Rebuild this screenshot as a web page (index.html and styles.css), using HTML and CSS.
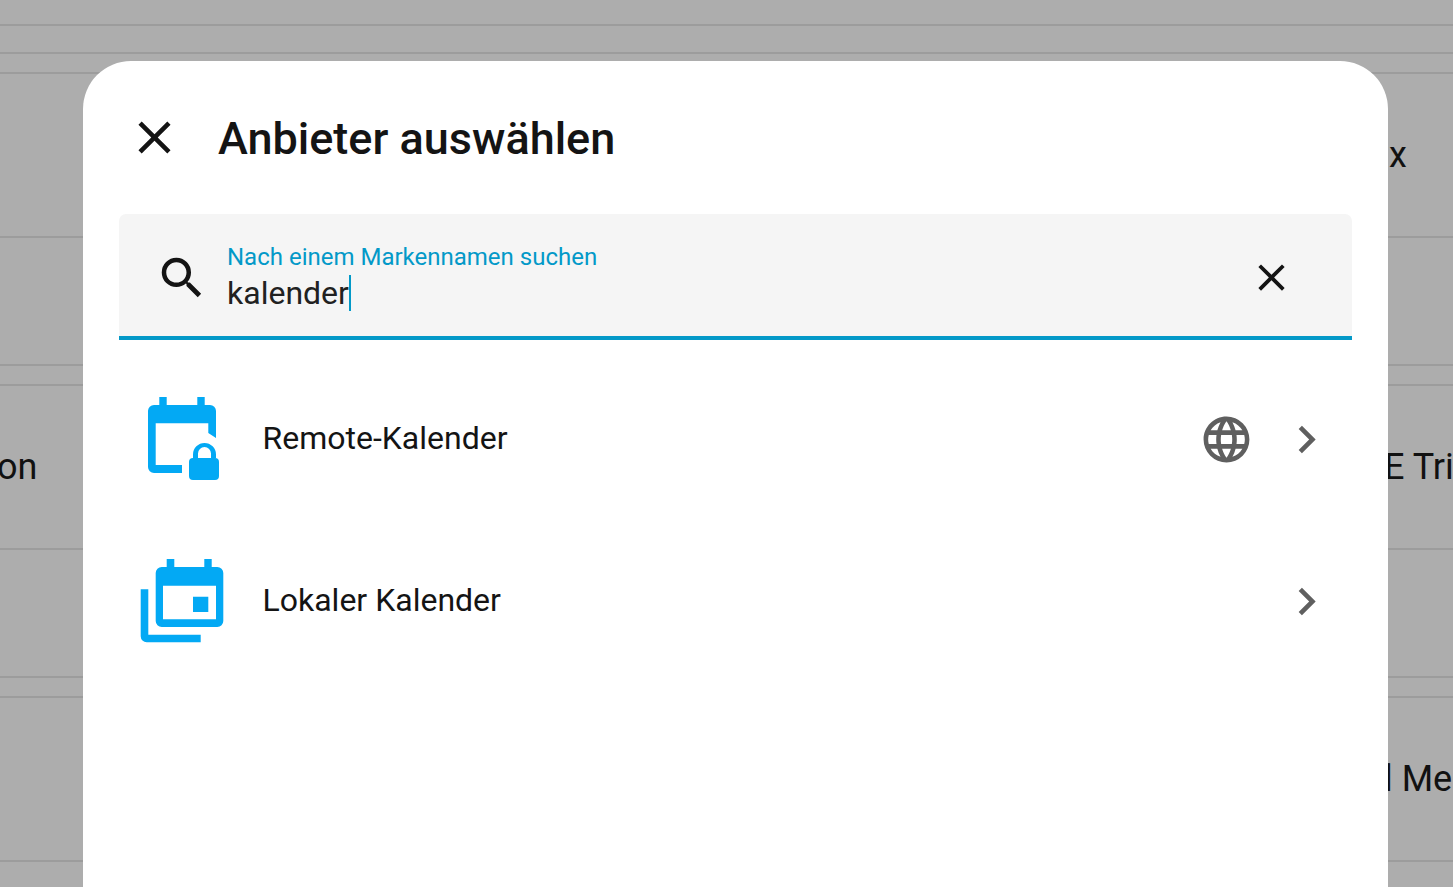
FILE: index.html
```html
<!DOCTYPE html>
<html lang="de">
<head>
    <meta charset="UTF-8">
    <meta name="viewport" content="width=device-width, initial-scale=1.0">
    <title>Anbieter auswählen</title>
    <link rel="stylesheet" href="styles.css">
</head>
<body>
    <!-- page behind the dialog -->
    <div class="backdrop">
        <div class="bg-row bg-row-a"></div>
        <div class="bg-row bg-row-b"></div>
        <div class="bg-row bg-row-c"></div>
        <div class="bg-row bg-row-tall"><span class="bg-left"></span><span class="bg-right bg-right-x">x</span></div>
        <div class="bg-row bg-row-d"></div>
        <div class="bg-row bg-row-c"></div>
        <div class="bg-row bg-row-tall"><span class="bg-left">on</span><span class="bg-right">E Tri</span></div>
        <div class="bg-row bg-row-d"></div>
        <div class="bg-row bg-row-c"></div>
        <div class="bg-row bg-row-tall"><span class="bg-left"></span><span class="bg-right">l Me</span></div>
    </div>

    <div class="dialog">
        <div class="dialog-header">
            <svg class="icon-55" viewBox="0 0 24 24"><path d="M19,6.41L17.59,5L12,10.59L6.41,5L5,6.41L10.59,12L5,17.59L6.41,19L12,13.41L17.59,19L19,17.59L13.41,12L19,6.41Z"/></svg>
            <h1 class="dialog-title">Anbieter auswählen</h1>
        </div>

        <div class="search-field">
            <svg class="icon-search" viewBox="0 0 24 24"><path d="M9.5,3A6.5,6.5 0 0,1 16,9.5C16,11.11 15.41,12.59 14.44,13.73L14.71,14H15.5L20.5,19L19,20.5L14,15.5V14.71L13.73,14.44C12.59,15.41 11.11,16 9.5,16A6.5,6.5 0 0,1 3,9.5A6.5,6.5 0 0,1 9.5,3M9.5,5C7,5 5,7 5,9.5C5,12 7,14 9.5,14C12,14 14,12 14,9.5C14,7 12,5 9.5,5Z"/></svg>
            <div class="search-text">
                <div class="search-label">Nach einem Markennamen suchen</div>
                <div class="search-value"><span class="caret-text">kalender</span></div>
            </div>
            <svg class="icon-clear" viewBox="0 0 24 24"><path d="M19,6.41L17.59,5L12,10.59L6.41,5L5,6.41L10.59,12L5,17.59L6.41,19L12,13.41L17.59,19L19,17.59L13.41,12L19,6.41Z"/></svg>
        </div>

        <div class="brand-list">
            <div class="brand-row">
                <svg class="brand-icon" viewBox="0 0 90 90">
                    <path d="M22.3 3H29.7V11H60.3V3H67.7V11H73A6 6 0 0 1 79 17V44L71.3 39V29.3H18.7V71H45V79H17A6 6 0 0 1 11 73V17A6 6 0 0 1 17 11H22.3Z"/>
                    <path fill-rule="evenodd" d="M67.5 49A11.500 11.500 0 0 1 79 60.500V64H78A4 4 0 0 1 82 68V82A4 4 0 0 1 78 86H56A4 4 0 0 1 52 82V68A4 4 0 0 1 56 64V60.500A11.500 11.500 0 0 1 67.500 49ZM67.500 53A6.500 6.500 0 0 0 61 59.500V64H74V59.500A6.500 6.500 0 0 0 67.500 53Z"/>
                </svg>
                <span class="brand-name">Remote-Kalender</span>
                <svg class="icon-55 icon-grey" viewBox="0 0 24 24"><path d="M16.36,14C16.44,13.34 16.5,12.68 16.5,12C16.5,11.32 16.44,10.66 16.36,10H19.74C19.9,10.64 20,11.31 20,12C20,12.69 19.9,13.36 19.74,14M14.59,19.56C15.19,18.45 15.65,17.25 15.97,16H18.92C17.96,17.65 16.43,18.93 14.59,19.56M14.34,14H9.66C9.56,13.34 9.5,12.68 9.5,12C9.5,11.32 9.56,10.65 9.66,10H14.34C14.43,10.65 14.5,11.32 14.5,12C14.5,12.68 14.43,13.34 14.34,14M12,19.96C11.17,18.76 10.5,17.43 10.09,16H13.91C13.5,17.43 12.83,18.76 12,19.96M8,8H5.08C6.03,6.34 7.57,5.06 9.4,4.44C8.8,5.55 8.35,6.75 8,8M5.08,16H8C8.35,17.25 8.8,18.45 9.4,19.56C7.57,18.93 6.03,17.65 5.08,16M4.26,14C4.1,13.36 4,12.69 4,12C4,11.31 4.1,10.64 4.26,10H7.64C7.56,10.66 7.5,11.32 7.5,12C7.5,12.68 7.56,13.34 7.64,14M12,4.03C12.83,5.23 13.5,6.57 13.91,8H10.09C10.5,6.57 11.17,5.23 12,4.03M18.92,8H15.97C15.65,6.75 15.19,5.55 14.59,4.44C16.43,5.07 17.96,6.34 18.92,8M12,2C6.47,2 2,6.5 2,12A10,10 0 0,0 12,22A10,10 0 0,0 22,12A10,10 0 0,0 12,2Z"/></svg>
                <svg class="icon-55 icon-grey chevron" viewBox="0 0 24 24"><path d="M8.59,16.58L13.17,12L8.59,7.41L10,6L16,12L10,18L8.59,16.58Z"/></svg>
            </div>
            <div class="brand-row">
                <svg class="brand-icon" viewBox="0 0 90 90">
                    <path d="M3.700 33.300H11.300V78.700H63.700V86.300H9.700A6 6 0 0 1 3.700 80.300Z"/>
                    <path fill-rule="evenodd" d="M29.700 3H37.300V11H67.300V3H74.700V11H80.300A6 6 0 0 1 86.300 17V65A6 6 0 0 1 80.300 71H24.700A6 6 0 0 1 18.700 65V17A6 6 0 0 1 24.700 11H29.700ZM26 29.700V63.300H79V29.700ZM56 40.700H71.300V56H56Z"/>
                </svg>
                <span class="brand-name">Lokaler Kalender</span>
                <svg class="icon-55 icon-grey chevron" viewBox="0 0 24 24"><path d="M8.59,16.58L13.17,12L8.59,7.41L10,6L16,12L10,18L8.59,16.58Z"/></svg>
            </div>
        </div>
    </div>
</body>
</html>
```

FILE: styles.css
```css
html, body {
    height: 100%;
}
body {
    margin: 0;
    overflow: hidden;
    position: relative;
    background-color: #adadad;
    color: #111;
    font-family: Roboto, sans-serif;
}
.backdrop {
    height: 100%;
    overflow: hidden;
}
.bg-row {
    display: flex;
    align-items: center;
    box-sizing: border-box;
    border-bottom: 2px solid #9c9c9c;
    font-size: 36px;
    white-space: nowrap;
}
.bg-row-a {
    height: 26px;
}
.bg-row-b {
    height: 28px;
}
.bg-row-c {
    height: 20px;
}
.bg-row-d {
    height: 128px;
}
.bg-row-tall {
    height: 164px;
}
.bg-left {
    width: 1387px;
    flex-shrink: 0;
    margin-left: -3px;
}
.bg-right-x {
    padding-left: 5px;
}
.dialog {
    position: absolute;
    left: 83px;
    top: 61px;
    bottom: 0;
    width: 1305px;
    box-sizing: border-box;
    background: white;
    border-radius: 48px 48px 0 0;
    padding: 0 36px;
}
.dialog-header {
    display: flex;
    align-items: center;
    height: 153px;
    padding-left: 8px;
    gap: 35.5px;
}
.dialog-title {
    margin: 2px 0 0;
    font-size: 45px;
    font-weight: 500;
    color: #141414;
}
.icon-55 {
    width: 55px;
    height: 55px;
    flex-shrink: 0;
    fill: #141414;
}
.dialog-header .icon-55 {
    margin-right: 0.5px;
}
.icon-grey {
    margin-top: 1px;
    fill: #5f5f5f;
}
.icon-search {
    width: 54px;
    height: 54px;
    margin-top: 2px;
    flex-shrink: 0;
    fill: #141414;
}
.icon-clear {
    width: 45px;
    height: 45px;
    flex-shrink: 0;
    fill: #141414;
}
.search-field {
    display: flex;
    align-items: center;
    box-sizing: border-box;
    height: 126px;
    padding: 4px 58.5px 0 36px;
    gap: 18px;
    background-color: #f5f5f5;
    border-bottom: 4px solid #0399c8;
    border-radius: 7px 7px 0 0;
}
.search-text {
    flex: 1;
    margin-bottom: 2px;
}
.search-label {
    font-size: 24px;
    line-height: 30px;
    margin-bottom: 3px;
    color: #0399c8;
}
.search-value {
    font-size: 32px;
    line-height: 36px;
    color: #212121;
}
.caret-text {
    display: inline-block;
    border-right: 2px solid #0399c8;
}
.brand-list {
    margin: 17.5px -36px 0;
}
.brand-row {
    display: flex;
    align-items: center;
    height: 162px;
    padding: 0 54px;
}
.brand-icon {
    width: 90px;
    height: 90px;
    margin-top: 1px;
    flex-shrink: 0;
    fill: #03a9f4;
    margin-right: 35.5px;
}
.brand-name {
    flex: 1;
    font-size: 32px;
    margin-bottom: 2px;
    color: #141414;
}
.chevron {
    margin-left: 25.5px;
}
```
